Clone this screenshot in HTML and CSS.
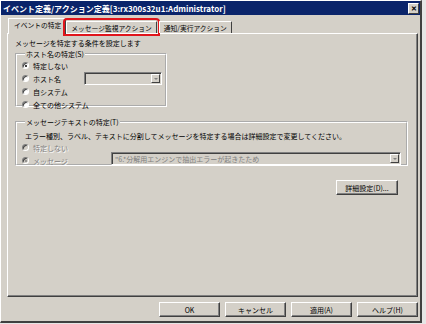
FILE: index.html
```html
<!DOCTYPE html>
<html>
    <head>
        <title>イベント定義/アクション定義</title>
        <link rel="stylesheet" href="styles.css">
    </head>
    <body>
        <div class="window">
            <!-- title bar -->
            <div class="titlebar">
                <span class="title">イベント定義/アクション定義[3:rx300s32u1:Administrator]</span>
                <span class="close">&#x2715;</span>
            </div>

            <!-- tabs -->
            <div class="tabs">
                <div class="tab selected">イベントの特定</div>
                <div class="tab marked">メッセージ監視アクション</div>
                <div class="tab">通知/実行アクション</div>
            </div>

            <div class="panel">
                <p class="intro">メッセージを特定する条件を設定します</p>

                <fieldset class="group host">
                    <legend>ホスト名の特定(S)</legend>
                    <div class="row"><span class="radio checked"></span><span>特定しない</span></div>
                    <div class="row">
                        <span class="radio"></span><span class="label-fixed">ホスト名</span>
                        <div class="combo short"><span class="combo-text"></span><span class="drop"></span></div>
                    </div>
                    <div class="row"><span class="radio"></span><span>自システム</span></div>
                    <div class="row"><span class="radio"></span><span>全ての他システム</span></div>
                </fieldset>

                <fieldset class="group text">
                    <legend>メッセージテキストの特定(T)</legend>
                    <p class="note">エラー種別、ラベル、テキストに分割してメッセージを特定する場合は詳細設定で変更してください。</p>
                    <div class="row disabled"><span class="radio"></span><span>特定しない</span></div>
                    <div class="row disabled">
                        <span class="radio checked"></span><span class="label-msg">メッセージ</span>
                        <div class="combo long"><span class="combo-text">"6.*分解用エンジンで抽出エラーが起きたため</span><span class="drop"></span></div>
                    </div>
                </fieldset>

                <div class="detail-row">
                    <button class="btn detail">詳細設定(D)...</button>
                </div>
            </div>

            <!-- dialog buttons -->
            <div class="buttons">
                <button class="btn">OK</button>
                <button class="btn">キャンセル</button>
                <button class="btn">適用(A)</button>
                <button class="btn">ヘルプ(H)</button>
            </div>
        </div>
    </body>
</html>
```

FILE: styles.css
```css
body {
    margin: 0px;
    background-color: #e6e6e6;
    font-family: "Noto Sans CJK JP", "Liberation Sans", sans-serif;
    font-size: 7px;
    color: #000;
}
.window {
    width: 419px;
    height: 320px;
    background-color: #d4d0c8;
    border-left: 1px solid #ffffff;
    border-top: 1px solid #ffffff;
    border-right: 2px solid #404040;
    border-bottom: 2px solid #404040;
    box-sizing: content-box;
}
.titlebar {
    height: 14px;
    background-color: #0a246a;
    color: #fff;
    display: flex;
    align-items: center;
    justify-content: space-between;
    padding-left: 2px;
    padding-right: 1px;
}
.title {
    font-weight: bold;
    font-size: 8px;
}
.close {
    width: 9px;
    height: 9px;
    background-color: #d4d0c8;
    color: #000;
    font-size: 7px;
    font-weight: bold;
    line-height: 9px;
    text-align: center;
    border: 1px solid;
    border-color: #fff #404040 #404040 #fff;
    box-sizing: content-box;
}

/* tabs */
.tabs {
    display: flex;
    align-items: flex-end;
    height: 15px;
    margin-top: 3px;
    padding-left: 7px;
    position: relative;
    z-index: 1;
    font-size: 6.75px;
}
.tab {
    height: 12px;
    line-height: 12px;
    padding: 0px 4px;
    border: 1px solid;
    border-color: #fff #404040 transparent #fff;
    border-bottom: none;
    border-radius: 1px 1px 0 0;
    box-sizing: border-box;
    white-space: nowrap;
}
.tab.selected {
    height: 16px;
    line-height: 13px;
    padding: 0px 4px 0px 5px;
    margin-bottom: -1px;
    background-color: #d4d0c8;
}
.tab.marked {
    outline: 2px solid #e0151b;
    outline-offset: 1px;
}
.tab:last-child {
    margin-left: 2px;
}

/* panel */
.panel {
    margin-left: 6px;
    width: 411px;
    height: 264px;
    border: 1px solid;
    border-color: #fff #404040 #404040 #fff;
    box-shadow: inset -1px -1px 0 #808080;
    box-sizing: border-box;
    padding: 4px 0px 0px 7px;
}
.intro {
    margin: 0px;
    line-height: 11px;
}
.group {
    margin: 0px;
    border: 2px groove #ffffff;
    padding: 0px 0px 0px 5px;
}
.group legend {
    padding: 0px 1px;
    margin-left: 3px;
    line-height: 10px;
}
.host {
    width: 152px;
    height: 58px;
    box-sizing: border-box;
    padding-top: 0px;
}
.text {
    width: 393px;
    height: 49px;
    box-sizing: border-box;
    margin-top: 10px;
}
.row {
    display: flex;
    align-items: center;
    height: 13px;
}
.radio {
    width: 7px;
    height: 7px;
    border-radius: 50%;
    background-color: #fff;
    border: 1px solid;
    border-color: #808080 #fff #fff #808080;
    box-shadow: inset 1px 1px 0 #404040;
    box-sizing: border-box;
    margin-right: 4px;
    position: relative;
}
.radio.checked::after {
    content: "";
    position: absolute;
    left: 2px;
    top: 2px;
    width: 2px;
    height: 2px;
    border-radius: 50%;
    background-color: #000;
}
.disabled {
    color: #808080;
    text-shadow: 1px 1px 0 #fff;
}
.disabled .radio {
    background-color: #d4d0c8;
}
.disabled .radio.checked::after {
    background-color: #808080;
}
.label-fixed {
    width: 51px;
}
.label-msg {
    width: 78px;
}
.note {
    margin: 5px 0px 0px 3px;
    line-height: 9px;
}
.combo {
    height: 13px;
    border: 1px solid;
    border-color: #808080 #fff #fff #808080;
    box-shadow: inset 1px 1px 0 #404040;
    box-sizing: border-box;
    display: flex;
    align-items: center;
    justify-content: space-between;
    padding: 1px 1px 0px 3px;
}
.combo.short {
    width: 78px;
    margin-top: -1px;
}
.combo.long {
    width: 290px;
    margin-top: -5px;
}
.combo-text {
    color: #808080;
    text-shadow: none;
}
.drop {
    width: 9px;
    height: 9px;
    background-color: #d4d0c8;
    border: 1px solid;
    border-color: #fff #404040 #404040 #fff;
    box-sizing: border-box;
    position: relative;
}
.drop::after {
    content: "";
    position: absolute;
    left: 2px;
    top: 3px;
    border-left: 2px solid transparent;
    border-right: 2px solid transparent;
    border-top: 2px solid #808080;
}
.detail-row {
    display: flex;
    justify-content: flex-end;
    padding-right: 19px;
    margin-top: 14px;
}
.btn {
    font-family: inherit;
    font-size: 7px;
    background-color: #d4d0c8;
    border: 1px solid;
    border-color: #fff #404040 #404040 #fff;
    box-shadow: inset -1px -1px 0 #808080;
    padding: 0px;
    height: 15px;
    width: 61px;
    color: #000;
}
.btn.detail {
    width: 62px;
}
.buttons {
    display: flex;
    justify-content: flex-end;
    gap: 5px;
    margin-top: 5px;
    padding-right: 2px;
}
```
